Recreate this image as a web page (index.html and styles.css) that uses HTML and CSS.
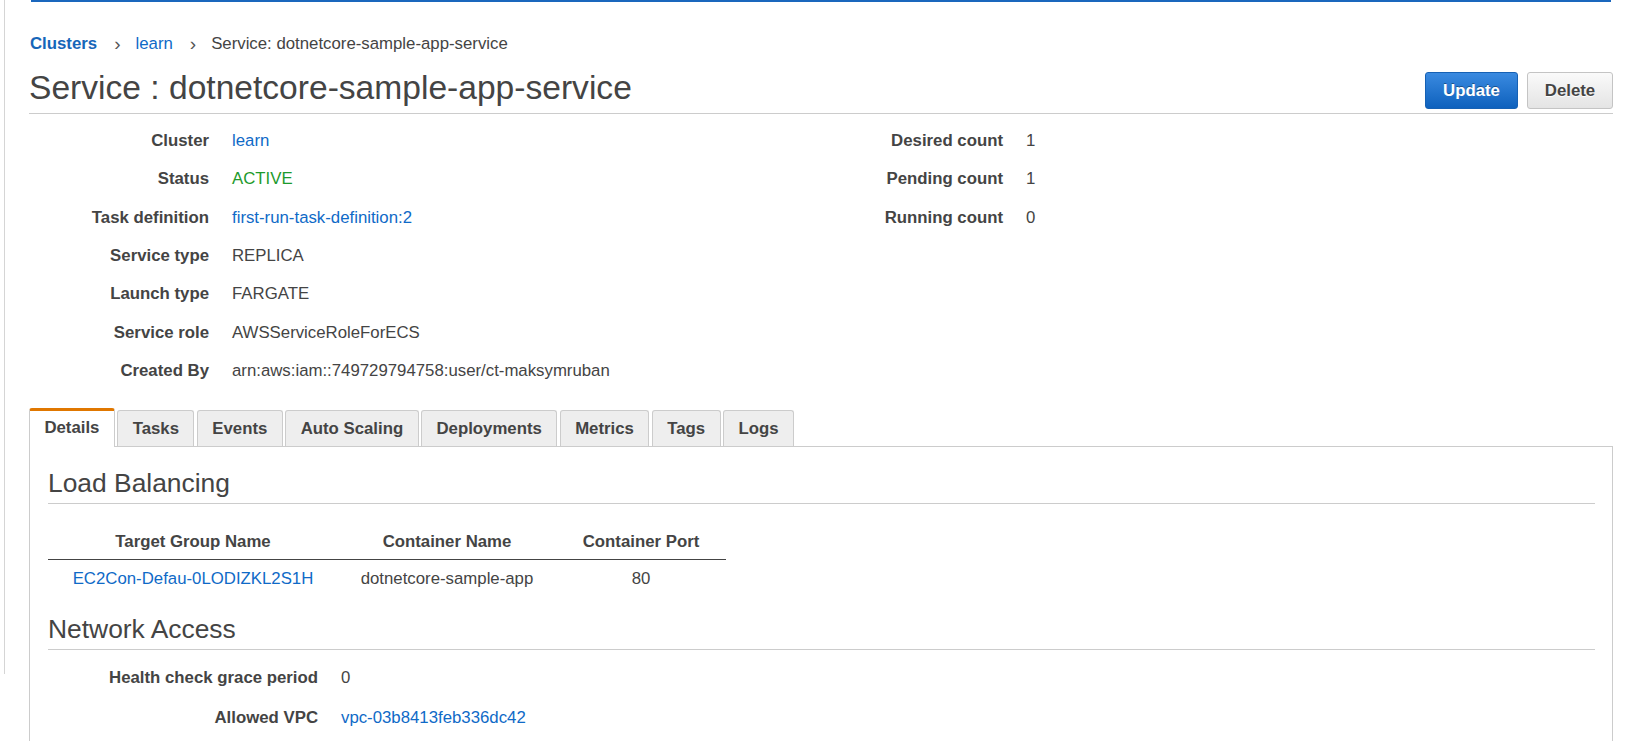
FILE: index.html
```html
<!DOCTYPE html>
<html>
<head>
<meta charset="utf-8">
<link rel="stylesheet" href="styles.css">
</head>
<body>
<div class="page">
  <div class="rail"></div>
  <div class="main">
    <div class="topline"></div>
    <nav class="crumbs">
      <a class="crumb strong" href="#">Clusters</a>
      <span class="sep">&#x203A;</span>
      <a class="crumb" href="#">learn</a>
      <span class="sep">&#x203A;</span>
      <span class="crumb current">Service: dotnetcore-sample-app-service</span>
    </nav>
    <div class="header">
      <h1 class="title">Service : dotnetcore-sample-app-service</h1>
      <div class="actions">
        <button class="btn primary">Update</button>
        <button class="btn">Delete</button>
      </div>
    </div>
    <div class="summary">
      <div class="kv">
        <div class="row"><span class="k">Cluster</span><a class="v link" href="#">learn</a></div>
        <div class="row"><span class="k">Status</span><span class="v ok">ACTIVE</span></div>
        <div class="row"><span class="k">Task definition</span><a class="v link" href="#">first-run-task-definition:2</a></div>
        <div class="row"><span class="k">Service type</span><span class="v">REPLICA</span></div>
        <div class="row"><span class="k">Launch type</span><span class="v">FARGATE</span></div>
        <div class="row"><span class="k">Service role</span><span class="v">AWSServiceRoleForECS</span></div>
        <div class="row"><span class="k">Created By</span><span class="v">arn:aws:iam::749729794758:user/ct-maksymruban</span></div>
      </div>
      <div class="kv">
        <div class="row"><span class="k">Desired count</span><span class="v">1</span></div>
        <div class="row"><span class="k">Pending count</span><span class="v">1</span></div>
        <div class="row"><span class="k">Running count</span><span class="v">0</span></div>
      </div>
    </div>
    <div class="tabs">
      <div class="tab active">Details</div>
      <div class="tab">Tasks</div>
      <div class="tab">Events</div>
      <div class="tab">Auto Scaling</div>
      <div class="tab">Deployments</div>
      <div class="tab">Metrics</div>
      <div class="tab">Tags</div>
      <div class="tab">Logs</div>
    </div>
    <div class="panel">
      <h2 class="section">Load Balancing</h2>
      <table class="grid">
        <thead>
          <tr><th class="c1">Target Group Name</th><th class="c2">Container Name</th><th class="c3">Container Port</th></tr>
        </thead>
        <tbody>
          <tr><td><a class="link" href="#">EC2Con-Defau-0LODIZKL2S1H</a></td><td>dotnetcore-sample-app</td><td>80</td></tr>
        </tbody>
      </table>
      <h2 class="section second">Network Access</h2>
      <div class="kv net">
        <div class="row"><span class="k">Health check grace period</span><span class="v">0</span></div>
        <div class="row"><span class="k">Allowed VPC</span><a class="v link" href="#">vpc-03b8413feb336dc42</a></div>
      </div>
    </div>
  </div>
</div>
</body>
</html>
```
FILE: styles.css
```css
html, body {
  margin: 0;
  padding: 0;
  background: #fff;
}
body {
  font-family: "Liberation Sans", Arial, sans-serif;
  color: #444;
  font-size: 16.8px;
  overflow: hidden;
}
a { text-decoration: none; }
.page {
  display: flex;
  align-items: flex-start;
  height: 741px;
  overflow: hidden;
}
.rail {
  width: 4px;
  height: 674px;
  border-right: 1px solid #d5d5d5;
  flex: none;
}
.main {
  flex: 1;
  margin-left: 24px;
  margin-right: 28px;
  min-width: 0;
}
.topline {
  height: 2px;
  background: #1a67bd;
  margin: 0 2px 0 2px;
}
.crumbs {
  display: flex;
  align-items: center;
  height: 20px;
  margin-top: 32px;
  font-size: 16.8px;
  padding-left: 1px;
}
.crumb { color: #0f6ac7; }
.crumb.strong { font-weight: bold; color: #1766b9; }
.crumb.current { color: #444; }
.sep {
  color: #555;
  margin: 0 15px 0 17px;
  font-size: 19px;
}
.header {
  display: flex;
  align-items: flex-end;
  justify-content: space-between;
  border-bottom: 1px solid #ccc;
  height: 59px;
}
.title {
  margin: 0 0 5px 0;
  font-weight: normal;
  font-size: 33.6px;
  line-height: 40px;
  color: #444;
}
.actions {
  display: flex;
  gap: 9px;
  margin-bottom: 4px;
}
.btn {
  font-family: "Liberation Sans", Arial, sans-serif;
  font-weight: bold;
  font-size: 16.8px;
  height: 37px;
  padding: 0 16px;
  border-radius: 3px;
  border: 1px solid #c4c4c4;
  background: linear-gradient(#fafafa, #e4e4e4);
  color: #444;
  text-shadow: 0 1px 0 #fff;
  cursor: pointer;
}
.btn.primary {
  min-width: 93px;
  border-color: #1661b4;
  background: linear-gradient(#3a8ae0, #0e61bd);
  color: #fff;
  text-shadow: 0 -1px 0 rgba(0,0,0,0.35);
}
.btn:not(.primary) { min-width: 86px; }
.summary {
  display: flex;
  margin-top: 8px;
}
.kv {
  display: flex;
  flex-direction: column;
}
.summary .kv:first-child { width: 794px; }
.row {
  display: flex;
  align-items: center;
  height: 38.33px;
}
.k {
  width: 180px;
  text-align: right;
  font-weight: bold;
  flex: none;
  color: #444;
}
.v {
  margin-left: 23px;
  color: #444;
}
.link { color: #0f6ac7; }
.v.link { color: #0f6ac7; }
.ok { color: #1d9a2c; }
.tabs {
  display: flex;
  align-items: flex-end;
  gap: 2.5px;
  margin-top: 18px;
  height: 38px;
  position: relative;
  z-index: 1;
}
.tab {
  height: 36px;
  line-height: 36px;
  padding: 0 14.4px;
  font-weight: bold;
  font-size: 16.8px;
  background: #eee;
  border: 1px solid #ccc;
  border-bottom: none;
  border-radius: 3px 3px 0 0;
  box-sizing: border-box;
  color: #444;
}
.tab.active {
  height: 39px;
  background: #fff;
  border-top: 3px solid #e07700;
  line-height: 33px;
  margin-bottom: -1px;
  padding: 0 14.4px;
}
.panel {
  border: 1px solid #ccc;
  border-bottom: none;
  padding: 0 17px 0 18px;
  height: 300px;
  box-sizing: border-box;
  overflow: hidden;
}
.section {
  font-weight: normal;
  font-size: 26.4px;
  margin: 20px 0 0 0;
  line-height: 32px;
  padding-bottom: 4px;
  border-bottom: 1px solid #ccc;
  color: #444;
}
.section.second { margin-top: 15px; }
.grid {
  border-collapse: collapse;
  margin-top: 21px;
  font-size: 16.8px;
}
.grid th {
  font-weight: bold;
  height: 34px;
  padding: 0;
  border-bottom: 1px solid #444;
  text-align: center;
  vertical-align: middle;
}
.grid td {
  height: 38px;
  padding: 0;
  text-align: center;
}
.c1 { width: 290px; }
.c2 { width: 218px; }
.c3 { width: 170px; }
.net .row { height: 39.5px; }
.net { margin-top: 8px; }
.net .k { width: 270px; }
```
